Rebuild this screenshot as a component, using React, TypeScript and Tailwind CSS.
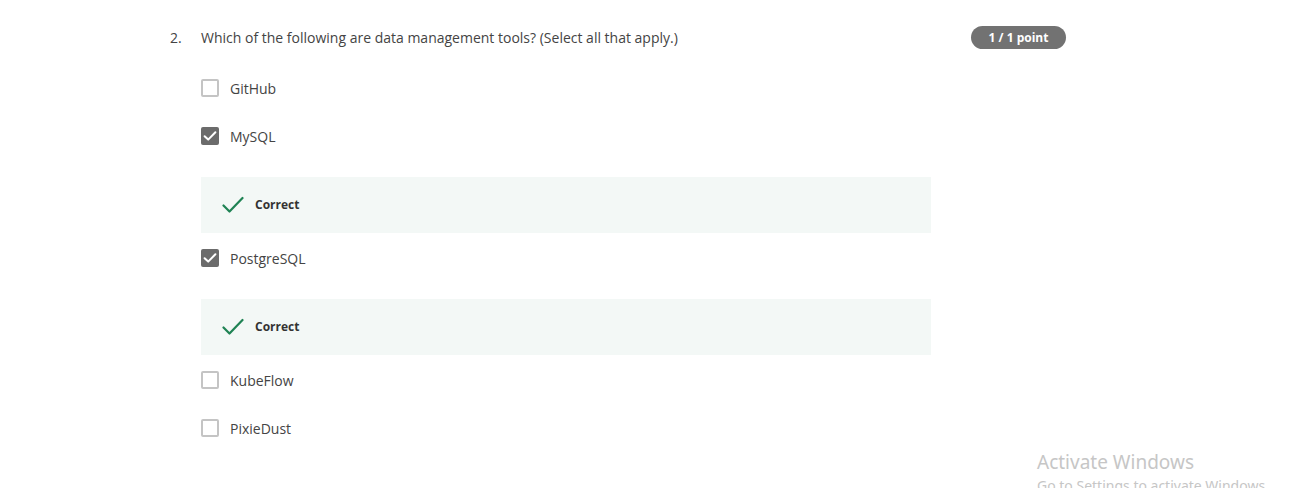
import React from 'react';

const options = [
  { label: 'GitHub', checked: false },
  { label: 'MySQL', checked: true },
  { label: 'PostgreSQL', checked: true },
  { label: 'KubeFlow', checked: false },
  { label: 'PixieDust', checked: false },
];

const Checkbox: React.FC<{ checked: boolean }> = ({ checked }) =>
  checked ? (
    <div className="w-[18px] h-[18px] rounded-[2px] bg-[#6b6b6b] flex items-center justify-center">
      <svg width="16" height="16" viewBox="0 0 16 16" fill="none">
        <path d="M2.6 8.2 L6.2 11.6 L13.4 4.2" stroke="white" strokeWidth="2" strokeLinecap="round" strokeLinejoin="round" />
      </svg>
    </div>
  ) : (
    <div className="w-[18px] h-[18px] rounded-[2px] border-2 border-[#c4c4c4] bg-white" />
  );

const Feedback: React.FC = () => (
  <div className="w-[730px] h-[56px] bg-[#f3f8f6] flex items-center pl-[21px] gap-[11px]">
    <svg width="22" height="18" viewBox="0 0 22 18" fill="none">
      <path d="M1.5 9.5 L7.5 15.5 L20.5 2" stroke="#1f8354" strokeWidth="2.2" strokeLinecap="round" strokeLinejoin="round" />
    </svg>
    <span className="text-[12px] font-bold text-[#333]">Correct</span>
  </div>
);

export default function App() {
  return (
    <div
      className="relative w-[1299px] h-[488px] bg-white overflow-hidden text-[#3c3c3c]"
      style={{ fontFamily: '"Open Sans", "Noto Sans", Arial, sans-serif' }}
    >
      <div className="pl-[170px] pt-[26px] w-[1066px]">
        <div className="flex items-center justify-between h-[23px]">
          <div className="flex items-center text-[14px]">
            <span className="w-[31px] text-[#444]">2.</span>
            <span className="text-[#444]">Which of the following are data management tools? (Select all that apply.)</span>
          </div>
          <span className="h-[23px] w-[95px] rounded-full bg-[#727272] text-white text-[12px] font-bold flex items-center justify-center">
            1 / 1 point
          </span>
        </div>

        <div className="pl-[31px] pt-[30px] flex flex-col">
          {options.map((o) => (
            <React.Fragment key={o.label}>
              <div className="flex items-center gap-[11px] h-[18px] mb-[30px]">
                <Checkbox checked={o.checked} />
                <span className="text-[14px] text-[#444]">{o.label}</span>
              </div>
              {o.checked && (
                <div className="mt-[2px] mb-[16px]">
                  <Feedback />
                </div>
              )}
            </React.Fragment>
          ))}
        </div>
      </div>

      <div
        className="absolute left-[1037px] top-[453px] text-[#c6c6c6] leading-none"
        style={{ fontFamily: '"Noto Sans", "Open Sans", sans-serif' }}
      >
        <div className="text-[19px]">Activate Windows</div>
        <div className="text-[14px] mt-[7px]">Go to Settings to activate Windows.</div>
      </div>
    </div>
  );
}
